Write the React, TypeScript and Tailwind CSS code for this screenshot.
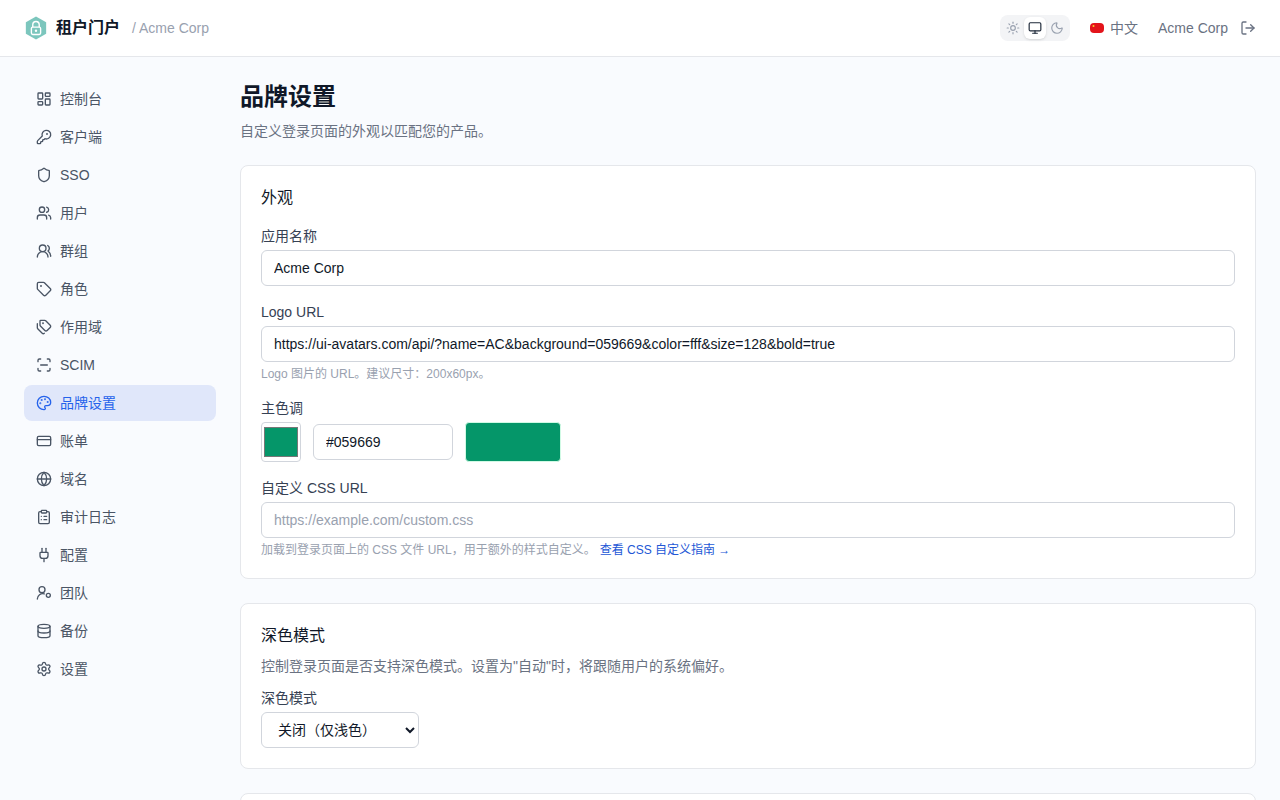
import {
  LayoutDashboard, KeyRound, Shield, Users, UsersRound, Tag, Tags, ScanLine, Palette, CreditCard, Globe,
  ClipboardList, Plug, Database, Settings, Sun, Monitor, Moon, LogOut,
} from 'lucide-react'

const font = { fontFamily: '"Liberation Sans", "Noto Sans CJK SC", sans-serif' }

function TeamIcon({ className }: { className?: string }) {
  return (
    <svg viewBox="0 0 24 24" fill="none" stroke="currentColor" strokeWidth="2" strokeLinecap="round" className={className}>
      <circle cx="9" cy="7" r="4.5" />
      <path d="M2 21a8 8 0 0 1 10.4-7.6" />
      <circle cx="18.5" cy="15.5" r="3" />
    </svg>
  )
}

const navItems = [
  { label: '控制台', icon: LayoutDashboard },
  { label: '客户端', icon: KeyRound },
  { label: 'SSO', icon: Shield },
  { label: '用户', icon: Users },
  { label: '群组', icon: UsersRound },
  { label: '角色', icon: Tag },
  { label: '作用域', icon: Tags },
  { label: 'SCIM', icon: ScanLine },
  { label: '品牌设置', icon: Palette, active: true },
  { label: '账单', icon: CreditCard },
  { label: '域名', icon: Globe },
  { label: '审计日志', icon: ClipboardList },
  { label: '配置', icon: Plug },
  { label: '团队', icon: TeamIcon },
  { label: '备份', icon: Database },
  { label: '设置', icon: Settings },
]

function Logo() {
  return (
    <svg viewBox="-1 0 26 26" className="w-6 h-6">
      <path d="M12 0.5 L23 6.75 V19.25 L12 25.5 L1 19.25 V6.75 Z" fill="#7cc6bd" />
      <path d="M8.5 12 V9.5 a3.5 3.5 0 0 1 7 0 V12" fill="none" stroke="#fff" strokeWidth="1.5" />
      <rect x="7" y="12" width="10" height="8" rx="1.5" fill="none" stroke="#fff" strokeWidth="1.5" />
      <circle cx="12" cy="16" r="1.3" fill="#fff" />
    </svg>
  )
}

function Flag() {
  return (
    <svg viewBox="0 0 14 10" className="w-[14px] h-[10px]">
      <rect width="14" height="10" rx="4" fill="#e3141b" />
      <circle cx="3.5" cy="3" r="1" fill="#f8d22c" />
    </svg>
  )
}

function Header() {
  return (
    <header className="h-[57px] shrink-0 bg-white border-b border-gray-200 flex items-center justify-between pl-6 pr-6">
      <div className="flex items-center">
        <Logo />
        <span className="ml-2 text-[16px] font-semibold text-gray-900">租户门户</span>
        <span className="ml-3 text-sm text-gray-400">/ Acme Corp</span>
      </div>
      <div className="flex items-center">
        <div className="flex items-center bg-gray-100 rounded-lg h-[26px] w-[70px] pl-[3px]">
          <span className="w-[21px] flex justify-center"><Sun className="w-[14px] h-[14px] text-gray-400" /></span>
          <span className="w-[22px] h-[22px] bg-white rounded-md flex items-center justify-center shadow-sm">
            <Monitor className="w-[14px] h-[14px] text-gray-800" />
          </span>
          <span className="w-[22px] flex justify-center"><Moon className="w-[14px] h-[14px] text-gray-400" /></span>
        </div>
        <div className="ml-5 flex items-center gap-[6px] text-sm text-gray-500">
          <Flag />
          <span>中文</span>
        </div>
        <span className="ml-5 text-sm text-gray-500">Acme Corp</span>
        <LogOut className="ml-3 w-4 h-4 text-gray-500" />
      </div>
    </header>
  )
}

function Sidebar() {
  return (
    <nav className="w-[216px] shrink-0 pl-6 pt-6 flex flex-col gap-[2px]">
      {navItems.map(item => (
        <a
          key={item.label}
          className={`h-9 rounded-lg px-3 flex items-center gap-2 text-sm ${
            item.active ? 'bg-[#e0e7fa] text-[#2563eb]' : 'text-gray-600'
          }`}
        >
          <item.icon className="w-4 h-4" />
          <span>{item.label}</span>
        </a>
      ))}
    </nav>
  )
}

const inputClass =
  'block w-full h-9 rounded-md border border-gray-300 bg-white px-3 text-sm text-gray-900 placeholder:text-gray-400'

function Label({ children }: { children: React.ReactNode }) {
  return <label className="block text-sm leading-5 text-gray-700 mb-1">{children}</label>
}

export default function App() {
  return (
    <div style={font} className="h-screen overflow-hidden flex flex-col bg-[#f9fbfe]">
      <Header />
      <div className="flex flex-1 min-h-0">
        <Sidebar />
        <main className="flex-1 min-w-0 pl-6 pr-6 pt-6">
          <h1 className="text-2xl leading-8 font-bold text-gray-900">品牌设置</h1>
          <p className="mt-2 text-sm leading-5 text-gray-500">自定义登录页面的外观以匹配您的产品。</p>

          <section className="mt-6 bg-white border border-gray-200 rounded-lg px-5 pt-5 pb-5">
            <h2 className="text-base leading-6 font-normal text-gray-900 mb-4">外观</h2>
            <div>
              <Label>应用名称</Label>
              <input className={inputClass} defaultValue="Acme Corp" readOnly />
            </div>
            <div className="mt-4">
              <Label>Logo URL</Label>
              <input
                className={inputClass}
                defaultValue="https://ui-avatars.com/api/?name=AC&background=059669&color=fff&size=128&bold=true"
                readOnly
              />
              <p className="mt-1 text-xs leading-4 text-gray-400">Logo 图片的 URL。建议尺寸：200x60px。</p>
            </div>
            <div className="mt-4">
              <Label>主色调</Label>
              <div className="flex items-center gap-3">
                <input type="color" defaultValue="#059669" className="block w-10 h-10 rounded-[4px] border border-gray-300 bg-white p-0" />
                <input className={`${inputClass} !w-[140px]`} defaultValue="#059669" readOnly />
                <span className="w-[96px] h-10 rounded-[4px] bg-[#059669] border border-[#d1fae5]" />
              </div>
            </div>
            <div className="mt-4">
              <Label>自定义 CSS URL</Label>
              <input className={inputClass} placeholder="https://example.com/custom.css" readOnly />
              <p className="mt-1 text-xs leading-4 text-gray-400">
                加载到登录页面上的 CSS 文件 URL，用于额外的样式自定义。
                <a className="ml-1 text-[#2257d6]">查看 CSS 自定义指南 →</a>
              </p>
            </div>
          </section>

          <section className="mt-6 bg-white border border-gray-200 rounded-lg px-5 pt-5 pb-5">
            <h2 className="text-base leading-6 font-normal text-gray-900">深色模式</h2>
            <p className="mt-2 mb-3 text-sm leading-5 text-gray-500">控制登录页面是否支持深色模式。设置为"自动"时，将跟随用户的系统偏好。</p>
            <Label>深色模式</Label>
            <select className="block w-[158px] h-9 rounded-md border border-gray-300 bg-white px-3 text-sm text-gray-900" defaultValue="off">
              <option value="off">关闭（仅浅色）</option>
            </select>
          </section>

          <section className="mt-6 h-40 bg-white border border-gray-200 rounded-lg" />
        </main>
      </div>
    </div>
  )
}
